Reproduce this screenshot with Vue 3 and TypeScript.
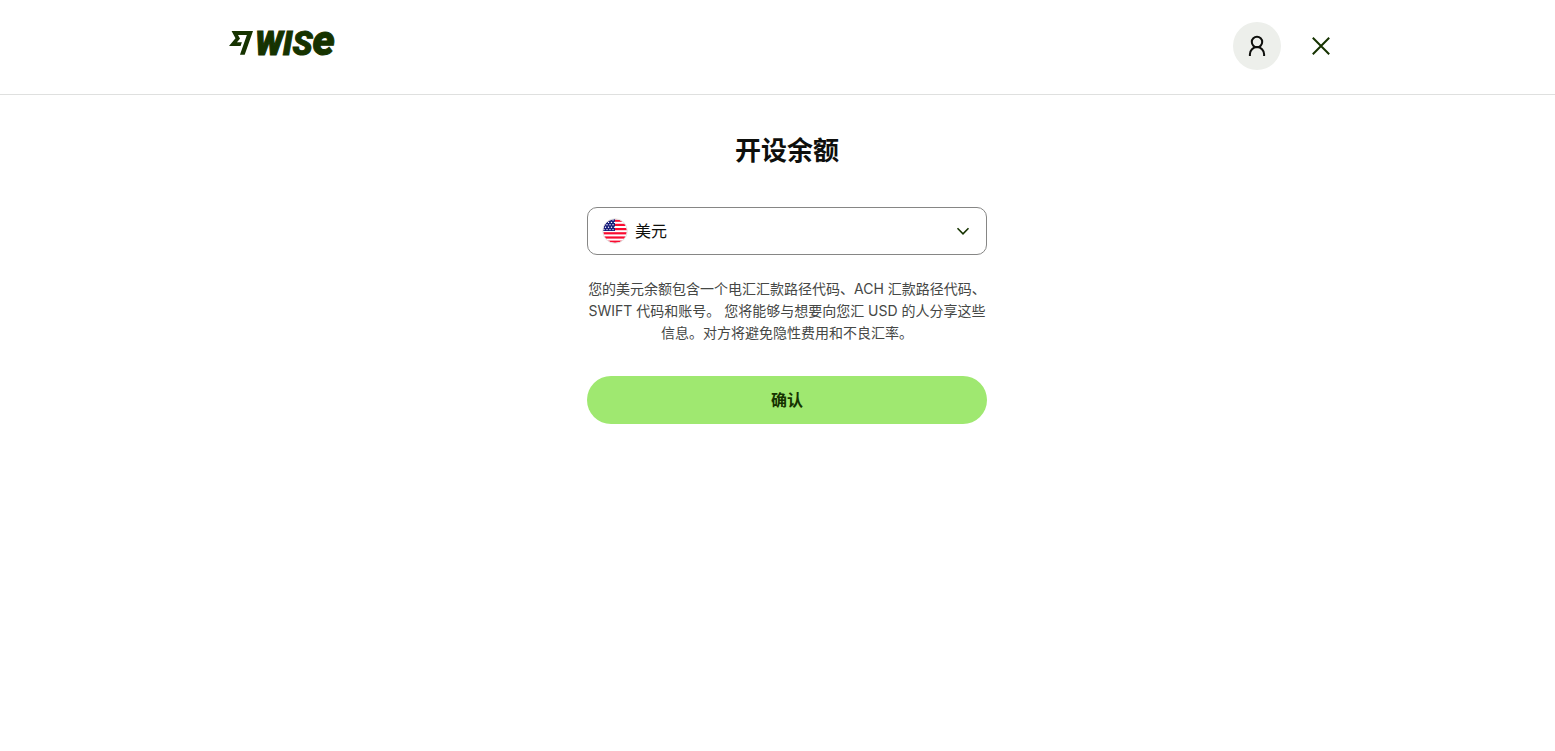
<script setup lang="ts">
import { ref } from 'vue'

interface Currency {
  code: string
  name: string
}

const currencies: Currency[] = [{ code: 'USD', name: '美元' }]
const selected = ref<string>('USD')
const stripes: number[] = [0, 1, 2, 3, 4, 5]
const stars: { x: number; y: number }[] = []
for (let row = 0; row < 5; row++) {
  for (let col = 0; col < 4; col++) {
    stars.push({ x: 2 + col * 3 + (row % 2) * 1.5, y: 2 + row * 2.4 })
  }
}
</script>

<template>
  <div class="page">
    <header class="header">
      <div class="header-inner">
        <a href="#" class="logo" aria-label="Wise">
          <svg width="110" height="30" viewBox="0 0 110 30">
            <path
              transform="translate(0 2.4) scale(1 1.04)"
              d="M6.488 7.469 0 15.05h11.585l1.301-3.576H7.922l3.033-3.507.01-.092L8.993 4.48h8.873l-6.878 18.925h4.706L24 .595H2.543l3.945 6.874Z"
            />
            <text x="26" y="27" class="word">WIS<tspan class="word-e">e</tspan></text>
          </svg>
        </a>
        <div class="actions">
          <button type="button" class="round avatar" aria-label="Account">
            <svg width="24" height="24" viewBox="0 0 24 24">
              <circle cx="12" cy="8" r="5.2" />
              <path d="M4.9 22v-1.8a7.1 7.1 0 0 1 14.2 0V22" />
            </svg>
          </button>
          <button type="button" class="round close" aria-label="Close">
            <svg width="24" height="24" viewBox="0 0 24 24">
              <path d="M3.8 3.8 20.2 20.2M20.2 3.8 3.8 20.2" />
            </svg>
          </button>
        </div>
      </div>
    </header>

    <main class="main">
      <form class="panel" @submit.prevent>
        <h1>开设余额</h1>
        <div class="field">
          <svg class="flag" width="26" height="26" viewBox="0 0 26 26" aria-hidden="true">
            <defs>
              <clipPath id="flag-disc"><circle cx="13" cy="13" r="12" /></clipPath>
            </defs>
            <g clip-path="url(#flag-disc)">
              <rect width="26" height="26" fill="#fff" />
              <rect v-for="n in stripes" :key="n" x="0" :y="1.6 + n * 4.2" width="26" height="2.2" fill="#f90b31" />
              <rect width="13" height="13" fill="#1a1f7c" />
              <circle v-for="(s, i) in stars" :key="i" :cx="s.x" :cy="s.y" r="0.7" fill="#fff" />
            </g>
            <circle cx="13" cy="13" r="12.3" fill="none" stroke="#e3e4e3" />
          </svg>
          <select v-model="selected" aria-label="货币">
            <option v-for="c in currencies" :key="c.code" :value="c.code">{{ c.name }}</option>
          </select>
          <svg class="chevron" width="16" height="16" viewBox="0 0 16 16" aria-hidden="true">
            <path d="M2.5 5.3 8 10.8l5.5-5.5" />
          </svg>
        </div>
        <p>您的美元余额包含一个电汇汇款路径代码、ACH 汇款路径代码、SWIFT 代码和账号。 您将能够与想要向您汇 USD 的人分享这些信息。对方将避免隐性费用和不良汇率。</p>
        <button type="submit" class="confirm">确认</button>
      </form>
    </main>
  </div>
</template>

<style>
body {
  margin: 0;
  background: #fff;
}
</style>

<style scoped>
.page {
  font-family: Inter, "Noto Sans CJK SC", sans-serif;
  color: #0e0f0c;
}
.header {
  border-bottom: 1px solid #dfe0df;
  padding: 22px 0 24px 19px;
}
.header-inner {
  display: flex;
  align-items: center;
  justify-content: space-between;
  max-width: 1116px;
  margin: 0 auto;
}
.logo {
  height: 30px;
  margin-bottom: 6px;
}
.logo svg {
  display: block;
  fill: #163300;
  overflow: visible;
}
.word {
  font: italic 900 33px Roboto, sans-serif;
  stroke: #163300;
  stroke-width: 1px;
}
.word-e {
  font-size: 42px;
}
.actions {
  display: flex;
  gap: 16px;
}
.round {
  display: flex;
  align-items: center;
  justify-content: center;
  width: 48px;
  height: 48px;
  padding: 0;
  border: 0;
  border-radius: 50%;
  background: transparent;
  cursor: pointer;
}
.round svg {
  fill: none;
  stroke-width: 2;
}
.avatar {
  background: #edefeb;
}
.avatar svg {
  stroke: #0e0f0c;
}
.close svg {
  stroke: #163300;
}
.main {
  padding: 36px 0 24px 19px;
}
.panel {
  display: flex;
  flex-direction: column;
  max-width: 400px;
  margin: 0 auto;
}
h1 {
  margin: 0;
  font-size: 26px;
  line-height: 40px;
  font-weight: 700;
  text-align: center;
}
.field {
  position: relative;
  margin-top: 36px;
}
select {
  display: block;
  width: 100%;
  height: 48px;
  padding: 0 47px;
  box-sizing: border-box;
  border: 1px solid #868685;
  border-radius: 10px;
  background: #fff;
  color: #0e0f0c;
  font: inherit;
  font-size: 16px;
  appearance: none;
}
.flag {
  position: absolute;
  left: 15px;
  top: 11px;
}
.chevron {
  position: absolute;
  right: 16px;
  top: 16px;
  fill: none;
  stroke: #163300;
  stroke-width: 1.6;
  pointer-events: none;
}
p {
  margin: 23px 0 0;
  color: #454745;
  font-size: 14px;
  line-height: 22px;
  text-align: center;
}
.confirm {
  height: 48px;
  margin-top: 32px;
  padding: 0 16px 2px;
  border: 0;
  border-radius: 24px;
  background: #9fe870;
  color: #163300;
  font: inherit;
  font-size: 16px;
  font-weight: 700;
  cursor: pointer;
}
</style>
